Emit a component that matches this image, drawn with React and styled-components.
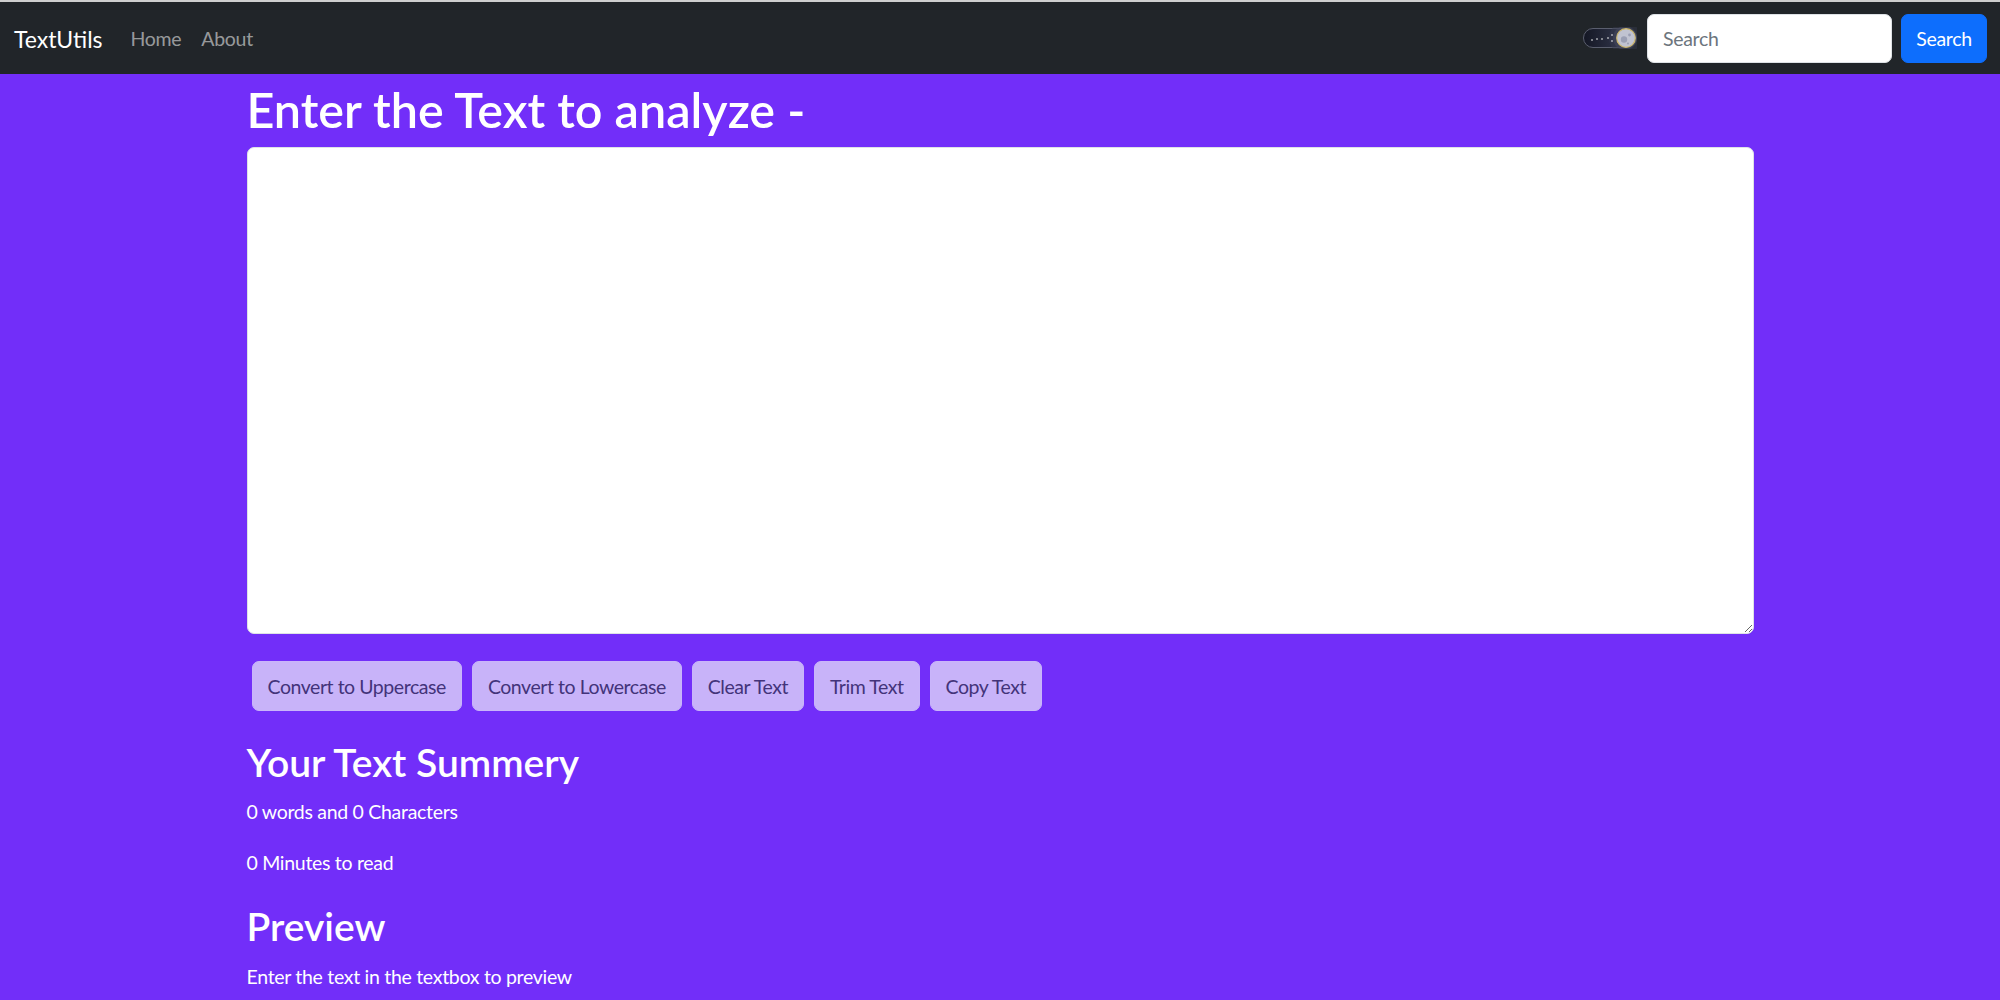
import React, { useState } from "react";
import styled, { createGlobalStyle } from "styled-components";

const PURPLE = "#722ef9";

const GlobalStyle = createGlobalStyle`
  html, body {
    margin: 0;
    padding: 0;
    background: ${PURPLE};
  }
  body {
    font-family: Lato, "Open Sans", sans-serif;
    color: #fff;
    border-top: 2px solid #cfcfcf;
  }
  * {
    box-sizing: border-box;
  }
`;

const Navbar = styled.nav`
  height: 72px;
  background: #212529;
  display: flex;
  align-items: center;
  padding: 0 13px 0 14px;
`;

const Brand = styled.a`
  font-size: 23px;
  color: #fff;
  margin-right: 18px;
  margin-top: 1px;
  text-decoration: none;
`;

const NavLinks = styled.ul`
  display: flex;
  list-style: none;
  margin: 0;
  padding: 0;
  flex: 1;
`;

const NavLink = styled.a`
  display: block;
  padding: 0 10px;
  font-size: 19.5px;
  letter-spacing: -0.3px;
  color: rgba(255, 255, 255, 0.55);
  text-decoration: none;
`;

const RightSide = styled.form`
  display: flex;
  align-items: center;
  gap: 10px;
`;

const ToggleWrap = styled.div`
  width: 54px;
  height: 22px;
  display: flex;
`;

const SearchInput = styled.input`
  width: 245px;
  height: 49px;
  border: 1px solid #dee2e6;
  border-radius: 7px;
  padding: 0 15px;
  font-family: inherit;
  font-size: 19.5px;
  letter-spacing: -0.3px;
  color: #212529;
  background: #fff;
  outline: none;
  &::placeholder {
    color: #6c757d;
  }
`;

const SearchButton = styled.button`
  width: 86px;
  height: 49px;
  border: 1px solid #0d6efd;
  border-radius: 7px;
  background: #0d6efd;
  color: #fff;
  font-family: inherit;
  font-size: 19.5px;
  letter-spacing: -0.3px;
  padding: 0;
  margin-left: -1px;
`;

const Container = styled.main`
  width: 1507px;
  margin: 0 auto;
`;

const Title = styled.h1`
  font-size: 48.5px;
  font-weight: 600;
  line-height: 1.2;
  margin: 6px 0 9px;
`;

const TextBox = styled.textarea`
  display: block;
  width: 100%;
  height: 487px;
  border: 1px solid #dee2e6;
  border-radius: 7px;
  background: #fff;
  padding: 8px 15px;
  font-family: inherit;
  font-size: 20px;
  outline: none;
`;

const ButtonRow = styled.div`
  display: flex;
  margin: 27px 0 28px;
`;

const ActionButton = styled.button`
  height: 50px;
  margin: 0 5px;
  padding: 0 15px;
  border: 1px solid #c9b5fa;
  border-radius: 7px;
  background: #c8b3f9;
  color: #43337a;
  font-family: inherit;
  font-size: 19.5px;
  letter-spacing: -0.45px;
`;

const SubTitle = styled.h2`
  font-size: 39px;
  font-weight: 600;
  line-height: 1.2;
  margin: ${(p) => (p.$spaced ? "25px" : "0")} 0 11.5px;
`;

const Para = styled.p`
  font-size: 19.5px;
  letter-spacing: -0.3px;
  line-height: 30px;
  margin: 0 0 ${(p) => (p.$last ? "0" : "21px")};
`;

const MoonToggle = () => (
  <svg width="54" height="22" viewBox="0 0 54 22">
    <defs>
      <linearGradient id="sky" x1="0" x2="1" y1="0" y2="0">
        <stop offset="0" stopColor="#141724" />
        <stop offset="0.55" stopColor="#2a2e41" />
        <stop offset="1" stopColor="#50556a" />
      </linearGradient>
    </defs>
    <rect x="0.5" y="1.5" width="53" height="19" rx="9.5" fill="url(#sky)" stroke="#5a5e6e" />
    <circle cx="42" cy="11" r="16" fill="#353a4e" opacity="0.45" />
    <circle cx="42" cy="11" r="12" fill="#454a5f" opacity="0.5" />
    <circle cx="9" cy="13" r="0.8" fill="#fff" />
    <circle cx="14" cy="12" r="0.8" fill="#fff" />
    <circle cx="19" cy="12" r="0.8" fill="#fff" />
    <circle cx="25" cy="11" r="0.8" fill="#fff" />
    <circle cx="29" cy="8" r="0.8" fill="#fff" />
    <circle cx="29" cy="14" r="0.8" fill="#fff" />
    <circle cx="43" cy="11" r="9.3" fill="#c0c3d1" stroke="#cdb76a" strokeWidth="1.2" />
    <circle cx="41" cy="12.5" r="3.2" fill="#9a9fb4" />
    <circle cx="46.5" cy="8" r="1.4" fill="#9a9fb4" />
    <circle cx="45" cy="16.5" r="1" fill="#9a9fb4" />
  </svg>
);

const App = () => {
  const [text, setText] = useState("");
  const words = text.split(/\s+/).filter((w) => w.length).length;

  return (
    <>
      <GlobalStyle />
      <Navbar>
        <Brand href="#">TextUtils</Brand>
        <NavLinks>
          <li>
            <NavLink href="#">Home</NavLink>
          </li>
          <li>
            <NavLink href="#">About</NavLink>
          </li>
        </NavLinks>
        <RightSide onSubmit={(e) => e.preventDefault()}>
          <ToggleWrap>
            <MoonToggle />
          </ToggleWrap>
          <SearchInput type="search" placeholder="Search" />
          <SearchButton type="submit">Search</SearchButton>
        </RightSide>
      </Navbar>
      <Container>
        <Title>Enter the Text to analyze -</Title>
        <TextBox value={text} onChange={(e) => setText(e.target.value)} />
        <ButtonRow>
          <ActionButton onClick={() => setText(text.toUpperCase())}>Convert to Uppercase</ActionButton>
          <ActionButton onClick={() => setText(text.toLowerCase())}>Convert to Lowercase</ActionButton>
          <ActionButton onClick={() => setText("")}>Clear Text</ActionButton>
          <ActionButton onClick={() => setText(text.split(/[ ]+/).join(" "))}>Trim Text</ActionButton>
          <ActionButton onClick={() => navigator.clipboard?.writeText(text)}>Copy Text</ActionButton>
        </ButtonRow>
        <SubTitle>Your Text Summery</SubTitle>
        <Para>
          {words} words and {text.length} Characters
        </Para>
        <Para>{0.008 * words} Minutes to read</Para>
        <SubTitle $spaced>Preview</SubTitle>
        <Para $last>{text.length ? text : "Enter the text in the textbox to preview"}</Para>
      </Container>
    </>
  );
};

export default App;
